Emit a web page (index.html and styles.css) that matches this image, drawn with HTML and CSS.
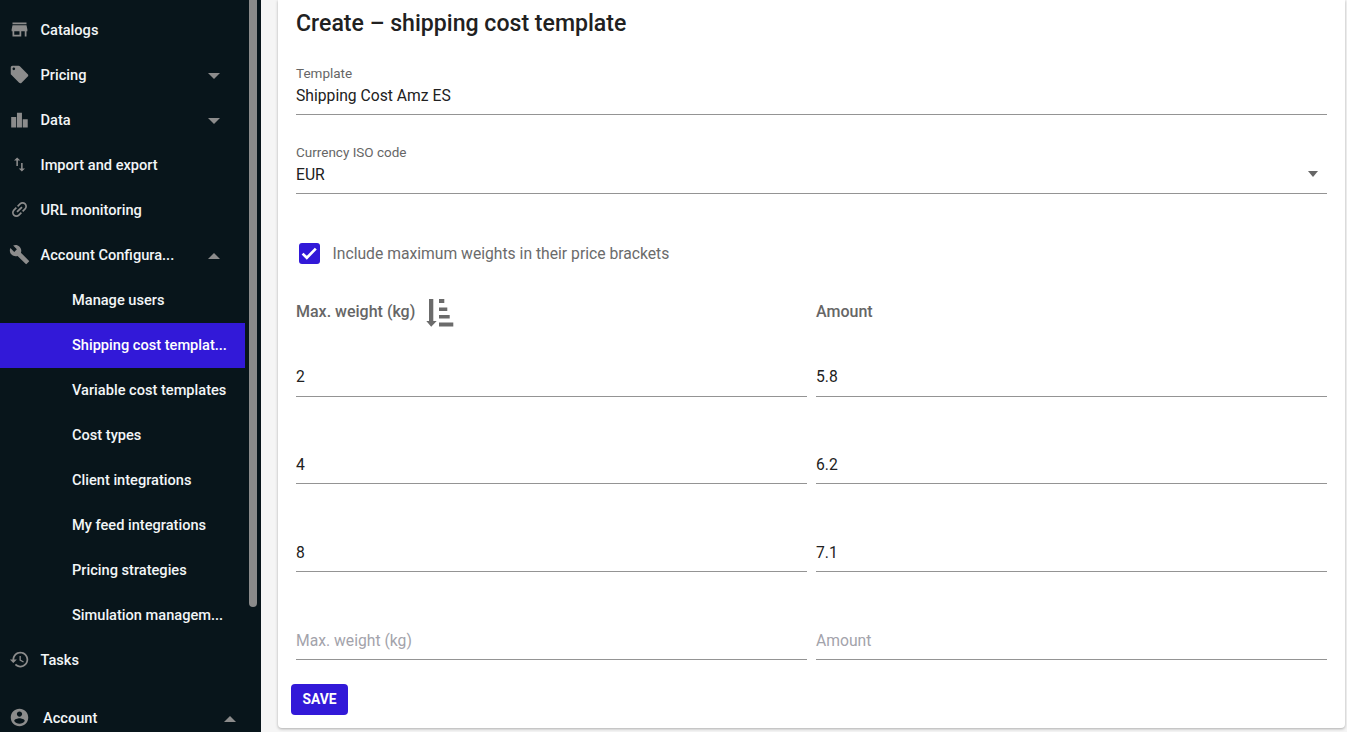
FILE: index.html
```html
<!DOCTYPE html>
<html lang="en">
<head>
<meta charset="utf-8">
<title>Create shipping cost template</title>
<link rel="stylesheet" href="styles.css">
</head>
<body>
<div class="app">
  <aside class="sidebar">
    <nav class="nav">
      <a class="row"><svg class="ico" viewBox="0 0 24 24"><path d="M20 4H4v2h16V4zm1 10v-2l-1-5H4l-1 5v2h1v6h10v-6h4v6h2v-6h1zm-9 4H6v-4h6v4z"/></svg><span class="lbl">Catalogs</span></a>
      <a class="row"><svg class="ico" viewBox="0 0 24 24"><path d="M21.41 11.58l-9-9C12.05 2.22 11.55 2 11 2H4c-1.1 0-2 .9-2 2v7c0 .55.22 1.05.59 1.42l9 9c.36.36.86.58 1.41.58.55 0 1.05-.22 1.41-.59l7-7c.37-.36.59-.86.59-1.41 0-.55-.23-1.06-.59-1.42zM5.5 7C4.67 7 4 6.33 4 5.5S4.67 4 5.5 4 7 4.67 7 5.5 6.33 7 5.5 7z"/></svg><span class="lbl">Pricing</span><i class="caret down"></i></a>
      <a class="row"><svg class="ico" viewBox="0 0 24 24"><path d="M2.5 9.1h5.7V21H2.5zM9.1 4.2h5.7V21H9.1zM15.7 11.7h5.7V21h-5.7z"/></svg><span class="lbl">Data</span><i class="caret down"></i></a>
      <a class="row"><svg class="ico" viewBox="0 0 24 24"><path d="M9 3L5 6.99h3V14h2V6.99h3L9 3zm7 14.01V10h-2v7.01h-3L15 21l4-3.99h-3z" transform="translate(1.2 1.2) scale(.9)"/></svg><span class="lbl">Import and export</span></a>
      <a class="row"><svg class="ico" viewBox="0 0 24 24"><path transform="rotate(-45 12 12)" d="M3.9 12c0-1.71 1.39-3.1 3.1-3.1h4V7H7c-2.76 0-5 2.24-5 5s2.24 5 5 5h4v-1.9H7c-1.71 0-3.1-1.39-3.1-3.1zM8 13h8v-2H8v2zm9-6h-4v1.9h4c1.71 0 3.1 1.39 3.1 3.1s-1.39 3.1-3.1 3.1h-4V17h4c2.76 0 5-2.24 5-5s-2.24-5-5-5z"/></svg><span class="lbl">URL monitoring</span></a>
      <a class="row"><svg class="ico" viewBox="0 0 24 24"><path d="M22.7 19l-9.1-9.1c.9-2.3.4-5-1.5-6.9-2-2-5-2.4-7.4-1.3L9 6 6 9 1.6 4.7C.4 7.1.9 10.1 2.9 12.1c1.9 1.9 4.6 2.4 6.9 1.5l9.1 9.1c.4.4 1 .4 1.4 0l2.3-2.3c.5-.4.5-1.1.1-1.4z"/></svg><span class="lbl">Account Configura...</span><i class="caret up"></i></a>
      <a class="row sub">Manage users</a>
      <a class="row sub active">Shipping cost templat...</a>
      <a class="row sub">Variable cost templates</a>
      <a class="row sub">Cost types</a>
      <a class="row sub">Client integrations</a>
      <a class="row sub">My feed integrations</a>
      <a class="row sub">Pricing strategies</a>
      <a class="row sub">Simulation managem...</a>
      <a class="row"><svg class="ico" viewBox="0 0 24 24"><path d="M13 3c-4.97 0-9 4.03-9 9H1l3.89 3.89.07.14L9 12H6c0-3.87 3.13-7 7-7s7 3.13 7 7-3.13 7-7 7c-1.93 0-3.68-.79-4.94-2.06l-1.42 1.42C8.27 19.99 10.51 21 13 21c4.97 0 9-4.03 9-9s-4.03-9-9-9zm-1 5v5l4.28 2.54.72-1.21-3.5-2.08V8H12z"/></svg><span class="lbl">Tasks</span></a>
      <a class="row account"><svg class="ico" viewBox="0 0 24 24"><path d="M12 2C6.48 2 2 6.48 2 12s4.48 10 10 10 10-4.48 10-10S17.52 2 12 2zm0 3c1.66 0 3 1.34 3 3s-1.34 3-3 3-3-1.34-3-3 1.34-3 3-3zm0 14.2c-2.5 0-4.71-1.28-6-3.22.03-1.99 4-3.08 6-3.08 1.99 0 5.97 1.09 6 3.08-1.29 1.94-3.5 3.22-6 3.22z"/></svg><span class="lbl">Account</span><i class="caret up"></i></a>
    </nav>
    <div class="thumb"></div>
  </aside>
  <main class="main">
    <section class="card">
      <h1 class="title">Create – shipping cost template</h1>
      <div class="field first">
        <div class="label">Template</div>
        <div class="value">Shipping Cost Amz ES</div>
      </div>
      <div class="field second">
        <div class="label">Currency ISO code</div>
        <div class="value select">EUR<i class="sel-caret"></i></div>
      </div>
      <div class="check-row">
        <span class="box"><svg viewBox="0 0 21 21"><path d="M3.6 10.6l4.2 4.2 9-9.2" fill="none" stroke="#fff" stroke-width="2.7"/></svg></span>
        <span class="check-text">Include maximum weights in their price brackets</span>
      </div>
      <div class="grid head">
        <div class="th">Max. weight (kg)<svg class="sort" viewBox="0 0 28 28"><path d="M3 0h4.3v22h3.4L5.2 27.7 .3 22H3z"/><path d="M13 0h5.3v4H13zM13 8.5h8.3V12H13zM13 16h10.7v3.5H13zM13 23.5h14.3v4H13z"/></svg></div>
        <div class="th">Amount</div>
      </div>
      <div class="grid cell r1"><div class="cellv">2</div><div class="cellv">5.8</div></div>
      <div class="grid cell r3"><div class="cellv">4</div><div class="cellv">6.2</div></div>
      <div class="grid cell r2"><div class="cellv">8</div><div class="cellv">7.1</div></div>
      <div class="grid cell r2"><div class="cellv ph">Max. weight (kg)</div><div class="cellv ph">Amount</div></div>
      <button class="save">SAVE</button>
    </section>
  </main>
</div>
</body>
</html>
```
FILE: styles.css
```css
* { box-sizing: border-box; }
html, body { margin: 0; height: 100%; overflow: hidden; }
body { font-family: Roboto, "Liberation Sans", sans-serif; background: #f5f5f5; color: #212121; }
.app { display: flex; height: 732px; }
.sidebar { position: relative; width: 261px; flex: none; background: #08151b; overflow: hidden; }
.nav { width: 245px; padding-top: 8px; display: flex; flex-direction: column; }
.row { height: 45px; flex: none; display: flex; align-items: center; padding: 0 0 2px 8.5px; color: #f2f5f7; font-size: 14.6px; font-weight: 500; white-space: nowrap; position: relative; }
.ico { width: 21px; height: 21px; fill: #8c8c8c; flex: none; margin-right: 11px; }
.lbl { flex: 1; }
.sub { padding-left: 72px; }
.active { background: #3219d8; color: #fff; }
.account { margin-top: 13px; }
.account .lbl { margin-left: 2.5px; }
.caret { width: 0; height: 0; border-left: 6px solid transparent; border-right: 6px solid transparent; margin: 2px 25px 0 0; }
.caret.down { border-top: 6px solid #8c8c8c; }
.caret.up { border-bottom: 6px solid #8c8c8c; }
.account .caret { margin-right: 9px; }
.thumb { position: absolute; left: 249px; top: -10px; width: 8px; height: 617px; background: #8a8a8a; border-radius: 4px; }
.main { flex: 1; min-width: 0; padding: 0 2px 4px 17px; }
.card { height: 728px; background: #fff; border-radius: 0 0 4px 4px; box-shadow: 0 1px 3px rgba(0,0,0,.3); padding: 0 18px; }
.title { margin: 0; padding-top: 9px; height: 62px; font-size: 23.1px; font-weight: 500; line-height: 29px; color: #212121; }
.field { border-bottom: 1px solid #949494; }
.first { height: 53px; }
.second { height: 53px; margin-top: 26px; }
.label { font-size: 13.5px; line-height: 15px; color: #666; padding-top: 4px; height: 19px; }
.value { font-size: 15.7px; line-height: 19px; margin-top: 5px; position: relative; color: #212121; }
.sel-caret { position: absolute; right: 9px; top: 6px; width: 0; height: 0; border-left: 5.5px solid transparent; border-right: 5.5px solid transparent; border-top: 6px solid #666; }
.check-row { display: flex; align-items: center; margin-top: 48px; height: 22px; padding-left: 3px; }
.box { width: 21px; height: 21px; border-radius: 3px; background: #3219d8; display: block; flex: none; }
.box svg { display: block; width: 21px; height: 21px; }
.check-text { margin-left: 12.5px; font-size: 15.7px; color: #6b6b6b; }
.grid { display: grid; grid-template-columns: 511px 511px; column-gap: 9px; }
.head { margin-top: 31px; height: 32px; align-items: center; }
.th { display: flex; align-items: center; font-size: 16px; font-weight: 500; color: #666; }
.sort { width: 28px; height: 28px; fill: #6b6b6b; margin: 4px 0 0 11px; }
.cell { align-items: end; }
.r1 { height: 51px; margin-top: 19px; }
.r2 { height: 52px; margin-top: 36px; }
.r3 { height: 52px; margin-top: 35px; }
.cellv { font-size: 15.7px; line-height: 19px; height: 29px; border-bottom: 1px solid #949494; color: #212121; }
.r1 .cellv { height: 30px; }
.ph { color: #a3a3ab; }
.save { display: block; margin: 24px 0 0 -5px; width: 57px; height: 31px; border: 0; border-radius: 4px; background: #3219d8; color: #fff; font: 700 13.8px Roboto, sans-serif; padding: 0 0 2px; }
```
